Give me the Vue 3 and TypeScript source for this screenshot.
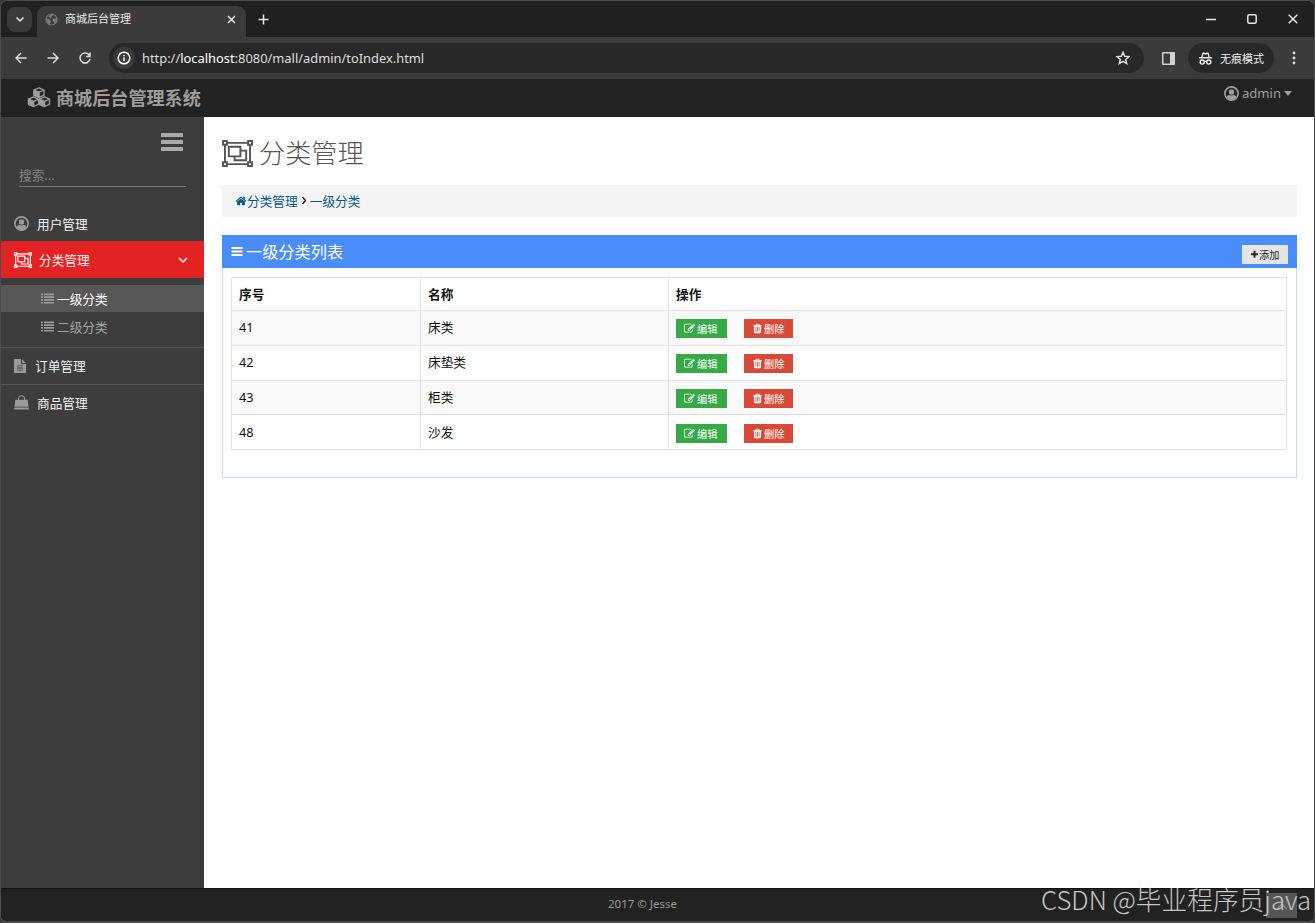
<template>
  <svg class="sprite" aria-hidden="true">
    <symbol id="home" viewBox="0 0 1792 1792"><path d="M1472 992v480q0 26-19 45t-45 19h-384v-384h-256v384h-384q-26 0-45-19t-19-45v-480q0-1 .5-3t.5-3l575-474 575 474q1 2 1 6zm223-69l-62 74q-8 9-21 11h-3q-13 0-21-7l-692-577-692 577q-12 8-24 7-13-2-21-11l-62-74q-8-10-7-23.5t11-21.5l719-599q32-26 76-26t76 26l244 204v-195q0-14 9-23t23-9h192q14 0 23 9t9 23v408l219 182q10 8 11 21.5t-7 23.5z" /></symbol>
    <symbol id="trash" viewBox="0 0 1792 1792"><path d="M704 1376v-704q0-14-9-23t-23-9h-64q-14 0-23 9t-9 23v704q0 14 9 23t23 9h64q14 0 23-9t9-23zm256 0v-704q0-14-9-23t-23-9h-64q-14 0-23 9t-9 23v704q0 14 9 23t23 9h64q14 0 23-9t9-23zm256 0v-704q0-14-9-23t-23-9h-64q-14 0-23 9t-9 23v704q0 14 9 23t23 9h64q14 0 23-9t9-23zm-544-992h448l-48-117q-7-9-17-11h-317q-10 2-17 11zm928 32v64q0 14-9 23t-23 9h-96v948q0 83-47 143.5t-113 60.5h-832q-66 0-113-58.5t-47-141.5v-952h-96q-14 0-23-9t-9-23v-64q0-14 9-23t23-9h309l70-167q15-37 54-63t79-26h320q40 0 79 26t54 63l70 167h309q14 0 23 9t9 23z" /></symbol>
    <symbol id="edit" viewBox="0 0 1792 1792"><path d="M888 1184l116-116-152-152-116 116v56h96v96h56zm440-720q-16-16-33 1l-350 350q-17 17-1 33t33-1l350-350q17-17 1-33zm80 594v190q0 119-84.5 203.5t-203.5 84.5h-832q-119 0-203.5-84.5t-84.5-203.5v-832q0-119 84.5-203.5t203.5-84.5h832q63 0 117 25 15 7 18 23 3 17-9 29l-49 49q-14 14-32 8-23-6-45-6h-832q-66 0-113 47t-47 113v832q0 66 47 113t113 47h832q66 0 113-47t47-113v-126q0-13 9-22l64-64q15-15 35-7t20 29zm-96-738l288 288-672 672h-288v-288zm444 132l-92 92-288-288 92-92q28-28 68-28t68 28l152 152q28 28 28 68t-28 68z" /></symbol>
    <symbol id="plus" viewBox="0 0 1792 1792"><path d="M1600 736v192q0 40-28 68t-68 28h-416v416q0 40-28 68t-68 28h-192q-40 0-68-28t-28-68v-416h-416q-40 0-68-28t-28-68v-192q0-40 28-68t68-28h416v-416q0-40 28-68t68-28h192q40 0 68 28t28 68v416h416q40 0 68 28t28 68z" /></symbol>
    <symbol id="user" viewBox="0 0 16 16">
      <circle cx="8" cy="8" r="7.1" fill="none" stroke="currentColor" stroke-width="1.800" />
      <circle cx="8" cy="6.300" r="2.900" />
      <path d="M2.200 12.500C3 10.600 4.400 9.500 5.500 9.200c1.500 1.100 3.500 1.100 5 0 1.100.3 2.500 1.400 3.300 3.300C12 14.600 10.100 15.300 8 15.300s-4-.7-5.800-2.800z" />
    </symbol>
    <symbol id="group" viewBox="0 0 32 28">
      <g fill="none" stroke="currentColor" stroke-width="2">
        <path d="M5 3h22M5 25h22M3 5v18M29 5v18M1 1h4v4H1zM27 1h4v4h-4zM1 23h4v4H1zM27 23h4v4h-4zM7 7h12v10H7zM19 11h6v10H13v-4" />
      </g>
    </symbol>
    <symbol id="list" viewBox="0 0 13 11"><path d="M0 .5h2v1.700H0zM3 .5h10v1.700H3zM0 3.300h2V5H0zM3 3.300h10V5H3zM0 6.100h2v1.700H0zM3 6.100h10v1.700H3zM0 8.900h2v1.700H0zM3 8.900h10v1.700H3z" /></symbol>
    <symbol id="bars" viewBox="0 0 24 20"><path d="M1.500 1h21q.5 0 .5.500v3q0 .5-.5.500h-21q-.5 0-.5-.500v-3q0-.5.500-.500zM1.500 8h21q.5 0 .5.500v3q0 .5-.5.500h-21q-.5 0-.5-.500v-3q0-.5.500-.500zM1.500 15h21q.5 0 .5.500v3q0 .5-.5.500h-21q-.5 0-.5-.500v-3q0-.5.500-.500z" /></symbol>
    <symbol id="file" viewBox="0 0 12 14"><path fill-rule="evenodd" d="M.8 0H7v4.200q0 .8.800.800H12v8.200q0 .8-.8.800H.8q-.8 0-.8-.8V.8Q0 0 .8 0zM8 .2L11.800 4H8zM3 6.500v.8h6v-.8zM3 8.600v.8h6v-.8zM3 10.700v.8h6v-.8z" /></symbol>
    <symbol id="bag" viewBox="0 0 16 16"><path d="M1.500 5h13l1 7.500H.5zM.4 13.300h15.200l.3 2.200H.1z" /><path d="M4.800 7.500V4a3.200 3.200 0 0 1 6.400 0v3.500" fill="none" stroke="currentColor" stroke-width="1.100" /></symbol>
    <symbol id="cubes" viewBox="0 0 24 21">
      <g stroke="currentColor" stroke-width="1.300" stroke-linejoin="round">
        <g v-for="cube in cubes" :key="cube" :transform="cube">
          <path d="M0-4.800l5 2.200v5.200L0 4.800l-5-2.200v-5.200zM0-.4l5-2.200M0-.4v5.200" fill="none" />
          <path d="M-5-2.600L0-.4v5.200l-5-2.200z" />
        </g>
      </g>
    </symbol>
    <symbol id="globe" viewBox="0 0 14 14">
      <circle cx="7" cy="7" r="6" fill="none" stroke="currentColor" stroke-width="1.100" />
      <path d="M1.500 6l3 .5 2 2v1.300l-1 .7v2.300C3 12.300 1 10 1.500 6zM6 1.200h3L8.700 3 7 3.800v1.500L5.300 6V4.500L3.500 4zM8.500 6l2.500.3L13 5.500c.2 3-.5 4.800-2.700 6.300L9.500 9.500 8 8.500z" />
    </symbol>
    <symbol id="incognito" viewBox="0 0 16 16">
      <path fill-rule="evenodd" d="M4.800 1.500h1.800L8 2.100l1.400-.6h1.800l1.300 5H15V8H1V6.500h2.500zM5.800 3.200L5 6.500h6l-.8-3.300L8 4z" />
      <g fill="none" stroke="currentColor" stroke-width="1.500"><circle cx="4.500" cy="11.800" r="2.200" /><circle cx="11.500" cy="11.800" r="2.200" /><path d="M6.700 11.400q1.300-.8 2.600 0" /></g>
    </symbol>
  </svg>

  <div class="window">
    <div class="tabstrip">
      <div class="tab-search">
        <svg class="line" width="10" height="10" viewBox="0 0 10 10"><path d="M1.500 3.500L5 7l3.500-3.500" /></svg>
      </div>
      <div class="tab">
        <svg class="tab-globe"><use href="#globe" /></svg>
        <span class="tab-title">商城后台管理</span>
        <svg class="line" width="9" height="9" viewBox="0 0 9 9"><path d="M1 1l7 7M8 1L1 8" /></svg>
      </div>
      <svg class="line new-tab" width="11" height="11" viewBox="0 0 11 11"><path d="M5.500.5v10M.5 5.500h10" /></svg>
      <div class="window-controls">
        <svg class="line" width="10" height="10" viewBox="0 0 10 10"><path d="M0 5.500h10" /></svg>
        <svg class="line" width="10" height="10" viewBox="0 0 10 10"><rect x=".8" y=".8" width="8.400" height="8.400" rx="1.500" /></svg>
        <svg class="line" width="10" height="10" viewBox="0 0 10 10"><path d="M.7.7l8.600 8.600M9.300.7L.7 9.300" /></svg>
      </div>
    </div>

    <div class="toolbar">
      <div class="nav-buttons">
        <svg class="line" width="12" height="12" viewBox="0 0 12 12"><path d="M11.500 6H1M6 1L1 6l5 5" /></svg>
        <svg class="line" width="12" height="12" viewBox="0 0 12 12"><path d="M.5 6H11M6 1l5 5-5 5" /></svg>
        <svg class="line" width="12" height="12" viewBox="0 0 12 12"><path d="M10.500 3.700A5 5 0 1 0 11 6.800M11 .5v4H7" /></svg>
      </div>
      <div class="address">
        <span class="info">
          <svg class="line" width="14" height="14" viewBox="0 0 14 14"><circle cx="7" cy="7" r="5.800" /><path d="M7 6.200V10M7 4v1.200" /></svg>
        </span>
        <span class="url">http://<b>localhost</b>:8080/mall/admin/toIndex.html</span>
        <svg class="line star" width="14" height="14" viewBox="0 0 14 14"><path d="M7 1.300l1.700 3.900 4.200.4-3.200 2.800 1 4.100L7 10.300l-3.700 2.200 1-4.100L1.100 5.600l4.200-.4z" /></svg>
      </div>
      <svg class="side-panel" width="13" height="13" viewBox="0 0 13 13"><path fill-rule="evenodd" d="M1 0h11q1 0 1 1v11q0 1-1 1H1q-1 0-1-1V1q0-1 1-1zm.5 1.500v10H8v-10z" /></svg>
      <div class="incognito">
        <svg><use href="#incognito" /></svg>
        <span>无痕模式</span>
      </div>
      <svg class="more" width="4" height="14" viewBox="0 0 4 14"><circle cx="2" cy="2" r="1.400" /><circle cx="2" cy="7" r="1.400" /><circle cx="2" cy="12" r="1.400" /></svg>
    </div>

    <header class="header">
      <svg class="brand-icon"><use href="#cubes" /></svg>
      <span class="brand">商城后台管理系统</span>
      <div class="account">
        <svg><use href="#user" /></svg>
        <span>admin</span>
        <i class="caret"></i>
      </div>
    </header>

    <div class="body">
      <aside class="sidebar">
        <svg class="toggle"><use href="#bars" /></svg>
        <div class="search">搜索...</div>
        <nav>
          <a class="item"><svg class="user-icon"><use href="#user" /></svg>用户管理</a>
          <a class="item active">
            <svg class="group-icon"><use href="#group" /></svg>分类管理
            <svg class="line chevron" width="10" height="10" viewBox="0 0 10 10"><path d="M1 3l4 4 4-4" /></svg>
          </a>
          <div class="submenu">
            <a v-for="name in subItems" :key="name" class="sub" :class="{ current: name === current }">
              <svg><use href="#list" /></svg>{{ name }}
            </a>
          </div>
          <a class="item ruled"><svg class="file-icon"><use href="#file" /></svg>订单管理</a>
          <a class="item ruled"><svg class="bag-icon"><use href="#bag" /></svg>商品管理</a>
        </nav>
      </aside>

      <main class="content">
        <h1><svg><use href="#group" /></svg>分类管理</h1>
        <div class="breadcrumb">
          <svg><use href="#home" /></svg><a>分类管理</a>
          <svg class="line sep" width="6" height="9" viewBox="0 0 6 9"><path d="M1.500 1L4.500 4.500l-3 3.500" /></svg>
          <a>{{ current }}</a>
        </div>
        <section class="panel">
          <div class="panel-head">
            <svg><use href="#bars" /></svg>
            <span>一级分类列表</span>
            <button class="btn add"><svg><use href="#plus" /></svg>添加</button>
          </div>
          <table>
            <thead>
              <tr><th class="col-id">序号</th><th class="col-name">名称</th><th>操作</th></tr>
            </thead>
            <tbody>
              <tr v-for="row in rows" :key="row.id">
                <td>{{ row.id }}</td>
                <td>{{ row.name }}</td>
                <td>
                  <div class="actions">
                    <button class="btn edit"><svg><use href="#edit" /></svg>编辑</button>
                    <button class="btn delete"><svg><use href="#trash" /></svg>删除</button>
                  </div>
                </td>
              </tr>
            </tbody>
          </table>
        </section>
      </main>
    </div>

    <footer class="footer">2017 © Jesse</footer>
    <div class="to-top"><svg class="line" width="14" height="10" viewBox="0 0 14 10"><path d="M2 8l5-5 5 5" /></svg></div>
    <div class="watermark">CSDN @毕业程序员java</div>
  </div>
</template>

<script setup lang="ts">
interface Category {
  id: number
  name: string
}

const current = '一级分类'
const subItems: string[] = ['一级分类', '二级分类']

const rows: Category[] = [
  { id: 41, name: '床类' },
  { id: 42, name: '床垫类' },
  { id: 43, name: '柜类' },
  { id: 48, name: '沙发' },
]

const cubes = ['translate(12 5.600)', 'translate(6.500 14.700)', 'translate(17.500 14.700)']
</script>

<style>
body {
  margin: 0;
  background: #3b3b3b;
}
</style>

<style scoped>
* {
  box-sizing: border-box;
}
.sprite {
  position: absolute;
  width: 0;
  height: 0;
}
svg {
  display: block;
  flex: none;
  fill: currentColor;
}
.line {
  fill: none;
  stroke: currentColor;
  stroke-width: 1.5;
}
.window {
  position: relative;
  display: flex;
  flex-direction: column;
  width: 1315px;
  height: 923px;
  border: 1px solid #4a4d4c;
  border-bottom-width: 2px;
  border-radius: 7px;
  overflow: hidden;
  background: #222;
  font-family: "Noto Sans", "Noto Sans CJK SC", sans-serif;
  font-size: 12.7px;
}

/* browser chrome */
.tabstrip {
  display: flex;
  align-items: center;
  height: 36px;
  flex: none;
  padding-left: 6px;
  background: #1f2020;
  color: #e8e8e8;
}
.tab-search {
  display: flex;
  align-items: center;
  justify-content: center;
  width: 25px;
  height: 25px;
  border-radius: 8px;
  background: #3b3b3b;
}
.tab {
  display: flex;
  align-items: center;
  width: 209px;
  height: 31px;
  margin: 5px 0 0 5px;
  padding: 0 10px 5px 8px;
  border-radius: 9px 9px 0 0;
  background: #3b3b3b;
}
.tab-globe {
  width: 13px;
  height: 13px;
  color: #777c80;
}
.tab-title {
  flex: 1;
  margin-left: 7px;
  font-size: 11px;
  line-height: 16px;
}
.new-tab {
  margin-left: 12px;
}
.window-controls {
  display: flex;
  gap: 31px;
  margin-left: auto;
  padding-right: 16px;
}
.toolbar {
  display: flex;
  align-items: center;
  height: 42px;
  flex: none;
  background: #3b3b3b;
  color: #dedede;
}
.nav-buttons {
  display: flex;
  gap: 20px;
  width: 108px;
  padding-left: 14px;
}
.address {
  display: flex;
  align-items: center;
  width: 1035px;
  height: 30px;
  padding: 0 14px 0 4px;
  border-radius: 15px;
  background: #282828;
}
.info {
  display: flex;
  align-items: center;
  justify-content: center;
  width: 22px;
  height: 22px;
  border-radius: 50%;
  background: #3b3b3b;
  color: #fff;
}
.url {
  margin-left: 7px;
  padding-bottom: 1px;
  font-size: 12.88px;
  line-height: 20px;
}
.url b {
  color: #fff;
  font-weight: 400;
}
.star {
  margin-left: auto;
}
.side-panel {
  margin-left: 18px;
  color: #d2d2d2;
}
.incognito {
  display: flex;
  align-items: center;
  gap: 7px;
  width: 86px;
  height: 30px;
  margin-left: 13px;
  padding-left: 10px;
  border-radius: 15px;
  background: #282828;
  color: #f0f0f0;
  font-size: 11px;
}
.incognito svg {
  width: 15px;
  height: 15px;
}
.more {
  margin-left: 18px;
}

/* page header */
.header {
  display: flex;
  height: 38px;
  flex: none;
  background: #222;
  color: #9d9d9d;
}
.brand-icon {
  width: 24px;
  height: 21px;
  margin: 8px 0 0 26px;
}
.brand {
  margin-left: 5px;
  font-size: 18.1px;
  font-weight: 700;
  line-height: 38px;
}
.account {
  display: flex;
  align-items: center;
  height: 28px;
  margin-left: auto;
  padding-right: 22px;
  font-size: 13.1px;
}
.account svg {
  width: 15px;
  height: 15px;
  margin-right: 3px;
}
.caret {
  margin-left: 3px;
  border: 4.5px solid transparent;
  border-top: 5px solid currentColor;
  border-bottom: 0;
}

.body {
  display: flex;
  flex: 1;
  min-height: 0;
}
.sidebar {
  width: 203px;
  background: #3d3d3d;
  color: #f2f2f2;
}
.toggle {
  width: 24px;
  height: 20px;
  margin: 15px 0 0 159px;
  color: #aaa;
}
.search {
  width: 167px;
  height: 25px;
  margin: 10px 0 18px 18px;
  border-bottom: 1px solid #777;
  color: #838383;
  line-height: 26px;
}
.item {
  display: flex;
  align-items: center;
  height: 36px;
  padding-left: 13px;
}
.item svg {
  color: #9b9b9b;
}
.item .user-icon {
  width: 15px;
  height: 15px;
  margin-right: 8px;
}
.active {
  height: 37px;
  background: #e22223;
}
.item .group-icon {
  width: 18px;
  height: 16px;
  margin-right: 7px;
  color: #fff;
}
.item .chevron {
  margin: 1px 16px 0 auto;
  color: #fff;
}
.submenu {
  padding: 7px 0;
}
.sub {
  display: flex;
  align-items: center;
  height: 28px;
  padding-left: 40px;
  color: #a5a5a5;
}
.sub svg {
  width: 13px;
  height: 11px;
  margin-right: 3px;
  color: #999;
}
.current {
  height: 27px;
  background: #575757;
  color: #fff;
}
.ruled {
  height: 37px;
  padding-bottom: 1px;
  border-top: 1px solid #565656;
}
.item .file-icon {
  width: 12px;
  height: 14px;
  margin-right: 9px;
}
.item .bag-icon {
  width: 15px;
  height: 15px;
  margin-right: 8px;
}

.content {
  flex: 1;
  padding: 17px 17px 0 18px;
  background: #fff;
  color: #111;
}
h1 {
  display: flex;
  align-items: center;
  height: 38px;
  margin: 0 0 13px;
  color: #555;
  font-size: 26.2px;
  font-weight: 300;
  line-height: 38px;
}
h1 svg {
  width: 31px;
  height: 27px;
  margin-right: 6px;
}
.breadcrumb {
  display: flex;
  align-items: center;
  height: 32px;
  padding: 0 0 1px 13px;
  background: #f4f4f4;
  color: #075985;
}
.breadcrumb svg:first-child {
  width: 12px;
  height: 12px;
}
.breadcrumb .sep {
  margin: 0 3px;
  color: #222;
}
.panel {
  height: 243px;
  margin-top: 18px;
  border: 1px solid #c7daf8;
  border-top: 0;
}
.panel-head {
  display: flex;
  height: 33px;
  margin: 0 -1px;
  padding: 0 9px;
  background: #4b8df8;
  color: #fff;
  font-size: 16.2px;
  line-height: 34px;
}
.panel-head > svg {
  width: 12px;
  height: 11px;
  margin: 11px 3px 0 0;
}
.btn {
  display: flex;
  align-items: center;
  height: 19px;
  padding: 0 0 0 8px;
  border: 0;
  color: #fff;
  font: 10.2px/19px "Noto Sans CJK SC", sans-serif;
  white-space: nowrap;
}
.btn svg {
  width: 11px;
  height: 11px;
}
.add {
  width: 46px;
  margin: 10px 0 0 auto;
  background: #e5e5e5;
  color: #222;
}
.add svg {
  width: 9px;
}
.edit {
  width: 51px;
  background: #35aa47;
}
.edit svg {
  margin-right: 2px;
}
.delete {
  width: 49px;
  background: #d84a38;
}
.delete svg {
  margin-right: 1px;
}
table {
  width: 1056px;
  margin: 9px 0 0 8px;
  border-collapse: collapse;
  table-layout: fixed;
}
th,
td {
  height: 34.75px;
  padding: 0 7px;
  border: 1px solid #e3e3e3;
  line-height: 18px;
  text-align: left;
}
td {
  padding-bottom: 1px;
}
th {
  height: 33px;
}
.col-id {
  width: 189px;
}
.col-name {
  width: 248px;
}
tbody tr:nth-child(odd) {
  background: #f9f9f9;
}
.actions {
  display: flex;
  gap: 17px;
  padding-top: 3px;
}

.footer {
  height: 33px;
  flex: none;
  padding-right: 30px;
  border-top: 1px solid #111;
  background: #222;
  color: #999;
  font-size: 11.5px;
  line-height: 30px;
  text-align: center;
}
.to-top {
  position: absolute;
  right: 17px;
  bottom: 3px;
  display: flex;
  align-items: center;
  justify-content: center;
  width: 31px;
  height: 25px;
  background: #555;
  color: #888;
}
.watermark {
  position: absolute;
  right: 3px;
  bottom: 3px;
  color: #c6c6c6;
  font: 300 25.7px/38px "Noto Sans CJK SC", sans-serif;
  white-space: nowrap;
}
</style>
